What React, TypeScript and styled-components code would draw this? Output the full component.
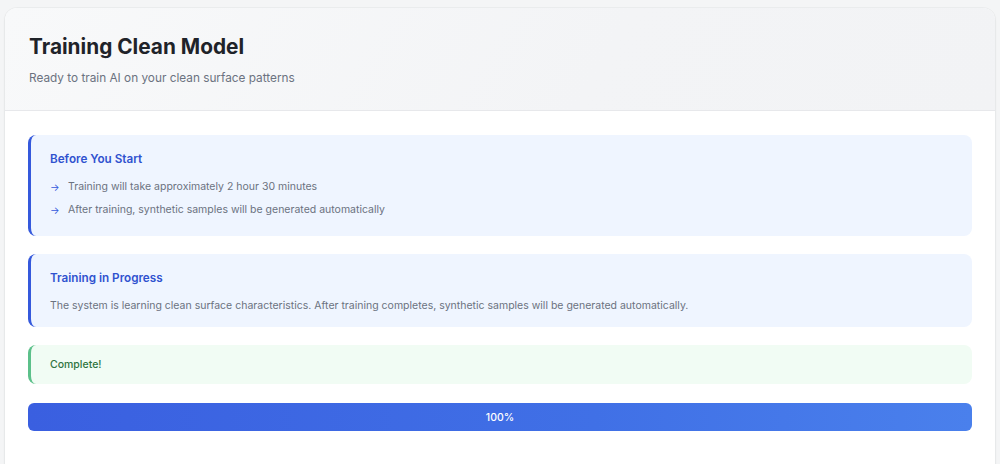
import React from "react";
import styled, { createGlobalStyle } from "styled-components";

const Global = createGlobalStyle`
  html, body { margin: 0; padding: 0; background: #f4f5f6; }
  body { font-family: Inter, "Noto Sans", "Liberation Sans", sans-serif; -webkit-font-smoothing: antialiased; }
  * { box-sizing: border-box; }
`;

const Page = styled.div`
  padding: 8px 5px 0;
  min-height: 464px;
`;

const Card = styled.div`
  background: #ffffff;
  border-radius: 12px;
  box-shadow: 0 1px 3px rgba(15, 23, 42, 0.06), 0 0 0 1px rgba(15, 23, 42, 0.03);
  overflow: hidden;
`;

const Header = styled.header`
  padding: 25px 24px 22px;
  background: linear-gradient(120deg, #f8f9fa 0%, #f3f4f6 60%, #f2f3f5 100%);
  border-bottom: 1px solid #e7e8eb;
`;

const Title = styled.h1`
  margin: 0;
  font-size: 20.8px;
  line-height: 28px;
  font-weight: 700;
  color: #1f2329;
`;

const Subtitle = styled.p`
  margin: 7px 0 0;
  font-size: 11.8px;
  line-height: 20px;
  color: #6b7280;
`;

const Body = styled.div`
  padding: 24px 23px 48px;
  display: flex;
  flex-direction: column;
  gap: 18px;
`;

const Notice = styled.div<{ $tone: "blue" | "green" }>`
  background: ${(p) => (p.$tone === "blue" ? "#eff5ff" : "#f1fcf4")};
  border-left: 3px solid ${(p) => (p.$tone === "blue" ? "#3559dc" : "#5cc08a")};
  border-radius: 8px;
  padding: ${(p) => (p.$tone === "blue" ? "15px 20px 12px 19px" : "10px 20px 10px 19px")};
`;

const NoticeTitle = styled.h3`
  margin: 0;
  font-size: 11.7px;
  line-height: 18px;
  font-weight: 600;
  color: #2f52cf;
`;

const NoticeText = styled.p`
  margin: 9px 0 0;
  font-size: 10.5px;
  line-height: 19px;
  color: #6b7280;
`;

const List = styled.ul`
  list-style: none;
  margin: 9px 0 4px;
  padding: 0;
  display: flex;
  flex-direction: column;
  gap: 3px;
`;

const Item = styled.li`
  display: flex;
  align-items: center;
  font-size: 10.5px;
  line-height: 20px;
  color: #6b7280;
`;

const Arrow = styled.span`
  color: #3559dc;
  width: 18px;
  font-size: 10px;
  flex: none;
`;

const Success = styled.p`
  margin: 0;
  font-size: 10.5px;
  line-height: 19px;
  font-weight: 500;
  color: #2f7440;
`;

const Bar = styled.div`
  margin-top: 1px;
  height: 28px;
  border-radius: 6px;
  background: #e5e7eb;
  overflow: hidden;
`;

const Fill = styled.div`
  height: 100%;
  background: linear-gradient(90deg, #3a5fe0 0%, #4070e6 60%, #4a80ec 100%);
  display: flex;
  align-items: center;
  justify-content: center;
  color: #ffffff;
  font-size: 10.5px;
  font-weight: 500;
`;

export default function App() {
  const progress = 100;
  return (
    <>
      <Global />
      <Page>
        <Card>
          <Header>
            <Title>Training Clean Model</Title>
            <Subtitle>Ready to train AI on your clean surface patterns</Subtitle>
          </Header>
          <Body>
            <Notice $tone="blue">
              <NoticeTitle>Before You Start</NoticeTitle>
              <List>
                <Item>
                  <Arrow>→</Arrow>Training will take approximately 2 hour 30 minutes
                </Item>
                <Item>
                  <Arrow>→</Arrow>After training, synthetic samples will be generated automatically
                </Item>
              </List>
            </Notice>
            <Notice $tone="blue">
              <NoticeTitle>Training in Progress</NoticeTitle>
              <NoticeText>
                The system is learning clean surface characteristics. After training completes, synthetic samples will be generated automatically.
              </NoticeText>
            </Notice>
            <Notice $tone="green">
              <Success>Complete!</Success>
            </Notice>
            <Bar>
              <Fill style={{ width: `${progress}%` }}>{progress}%</Fill>
            </Bar>
          </Body>
        </Card>
      </Page>
    </>
  );
}
